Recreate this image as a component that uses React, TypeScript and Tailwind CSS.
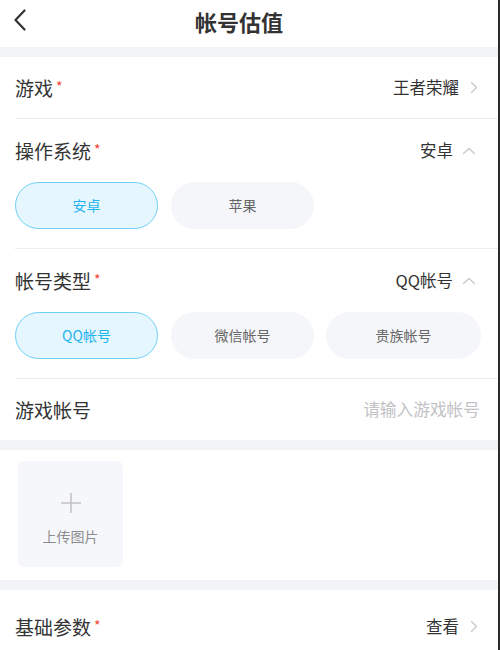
import React from 'react';

const font = { fontFamily: '"Noto Sans CJK SC", "Noto Sans", sans-serif' };

function ChevronRight() {
  return (
    <svg width="8" height="13" viewBox="0 0 8 13" fill="none" className="ml-[11px]">
      <path d="M1.5 1.5L6.5 6.5L1.5 11.5" stroke="#c9c9cc" strokeWidth="1.4" strokeLinecap="round" strokeLinejoin="round" />
    </svg>
  );
}

function ChevronUp() {
  return (
    <svg width="14" height="8" viewBox="0 0 14 8" fill="none" className="ml-[9px]">
      <path d="M1.5 6.5L7 1.5L12.5 6.5" stroke="#c9c9cc" strokeWidth="1.4" strokeLinecap="round" strokeLinejoin="round" />
    </svg>
  );
}

function Label({ text, required }: { text: string; required?: boolean }) {
  return (
    <div className="flex items-start text-[19px] leading-none text-[#333]">
      <span>{text}</span>
      {required && <span className="ml-[3px] mt-[1px] text-[14px] leading-none text-[#f5412f]">*</span>}
    </div>
  );
}

function Chip({ text, active, className }: { text: string; active?: boolean; className: string }) {
  return (
    <div
      className={
        active
          ? `${className} flex h-[47px] shrink-0 items-center justify-center rounded-full border border-[#6fd0f6] bg-[#e5f6fe] text-[14px] text-[#1fb4ee]`
          : `${className} flex h-[47px] shrink-0 items-center justify-center rounded-full bg-[#f5f6fa] text-[14px] text-[#666]`
      }
    >
      {text}
    </div>
  );
}

export default function App() {
  return (
    <div className="h-[650px] w-[500px] overflow-hidden border-r-2 border-[#2a2a2a] bg-white" style={font}>
      {/* header */}
      <div className="relative flex h-[47px] items-center justify-center pb-[5px] pr-[20px]">
        <svg width="14" height="22" viewBox="0 0 14 22" fill="none" className="absolute left-[13px] top-[9px]">
          <path d="M11.5 1.5L2.5 11L11.5 20.5" stroke="#333" strokeWidth="2.2" strokeLinecap="round" strokeLinejoin="round" />
        </svg>
        <h1 className="text-[22px] font-bold text-[#333]">帐号估值</h1>
      </div>
      <div className="h-[10px] bg-[#f2f3f7]" />

      <div className="pl-[15px]">
        <div className="flex h-[61px] items-center justify-between pr-[20px]">
          <Label text="游戏" required />
          <div className="flex items-center text-[16.5px] text-[#333]">
            王者荣耀
            <ChevronRight />
          </div>
        </div>

        <div className="border-t border-[#ececee] pr-[17px]">
          <div className="flex h-[63px] items-center justify-between pr-[5px]">
            <Label text="操作系统" required />
            <div className="flex items-center text-[16.5px] text-[#333]">
              安卓
              <ChevronUp />
            </div>
          </div>
          <div className="flex pb-[19px]">
            <Chip text="安卓" active className="w-[143px]" />
            <Chip text="苹果" className="ml-[13px] w-[143px]" />
          </div>
        </div>

        <div className="border-t border-[#ececee] pr-[17px]">
          <div className="flex h-[63px] items-center justify-between pr-[5px]">
            <Label text="帐号类型" required />
            <div className="flex items-center text-[16.5px] text-[#333]">
              QQ帐号
              <ChevronUp />
            </div>
          </div>
          <div className="flex pb-[19px]">
            <Chip text="QQ帐号" active className="w-[143px]" />
            <Chip text="微信帐号" className="ml-[13px] w-[143px]" />
            <Chip text="贵族帐号" className="ml-[12px] w-[155px]" />
          </div>
        </div>

        <div className="flex h-[62px] items-center justify-between border-t border-[#ececee] pr-[18px]">
          <Label text="游戏帐号" />
          <span className="text-[16.7px] text-[#c2c2c6]">请输入游戏帐号</span>
        </div>
      </div>

      <div className="h-[10px] bg-[#f2f3f7]" />

      <div className="px-[18px] pb-[13px] pt-[11px]">
        <div className="flex h-[106px] w-[105px] flex-col items-center justify-center rounded-[6px] bg-[#f6f7fa] pt-[10px]">
          <svg width="22" height="22" viewBox="0 0 22 22" fill="none">
            <path d="M11 1V21M1 11H21" stroke="#c4c4c8" strokeWidth="1.6" />
          </svg>
          <span className="mt-[12px] text-[14px] text-[#8c8c90]">上传图片</span>
        </div>
      </div>

      <div className="h-[10px] bg-[#f2f3f7]" />

      <div className="flex h-[72px] items-center justify-between pl-[15px] pr-[20px]">
        <Label text="基础参数" required />
        <div className="flex items-center text-[16.5px] text-[#333]">
          查看
          <ChevronRight />
        </div>
      </div>
    </div>
  );
}
